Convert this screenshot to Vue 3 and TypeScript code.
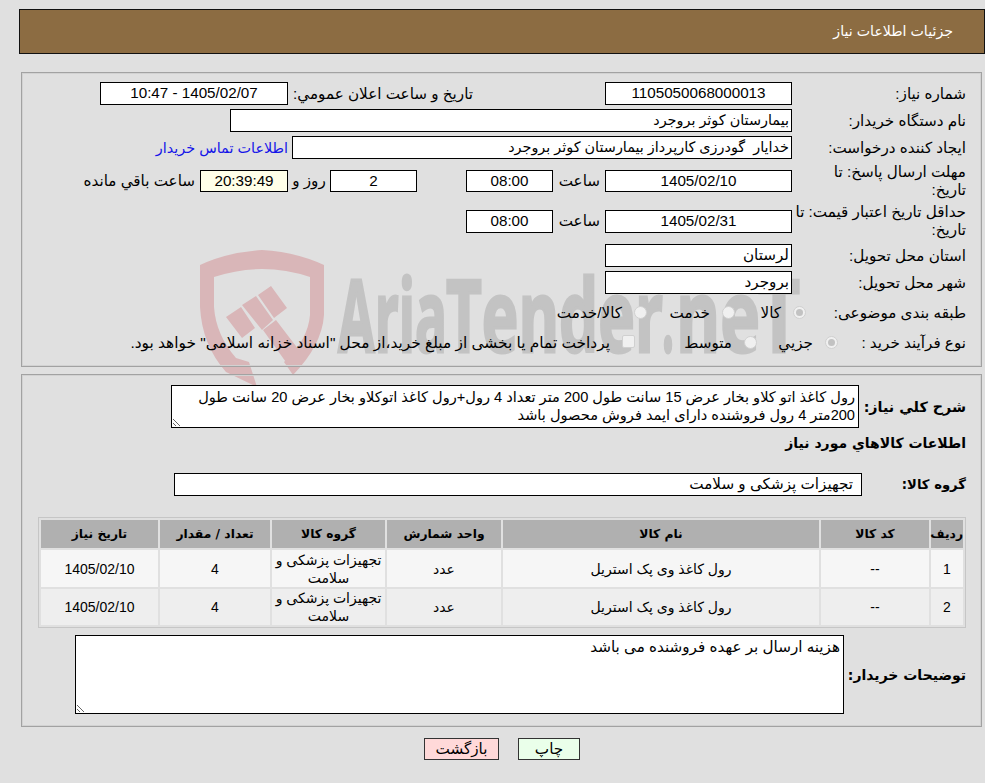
<script setup lang="ts">
interface Item { row: number; code: string; name: string; unit: string; group: string; qty: number; date: string }
const items: Item[] = [
  { row: 1, code: '--', name: 'رول کاغذ وی پک استریل', unit: 'عدد', group: 'تجهیزات پزشکی و سلامت', qty: 4, date: '1405/02/10' },
  { row: 2, code: '--', name: 'رول کاغذ وی پک استریل', unit: 'عدد', group: 'تجهیزات پزشکی و سلامت', qty: 4, date: '1405/02/10' }
]
const description = 'رول کاغذ اتو کلاو بخار عرض 15 سانت طول 200 متر تعداد 4 رول+رول کاغذ اتوکلاو بخار عرض 20 سانت طول 200متر 4 رول فروشنده دارای ایمد فروش محصول باشد'
const buyerNote = 'هزینه ارسال بر عهده فروشنده می باشد'
</script>

<template>
  <div class="page" dir="rtl">
    <svg class="watermark" width="985" height="400" viewBox="0 0 985 400" aria-hidden="true">
      <path class="shield" d="M262 250 Q296 252 324 265 L324 315 Q322 345 293 375 L284 362 Q308 340 310 315 L310 277 Q286 269 262 269 Q238 269 214 277 L214 307 Q216 335 236 358 L249 362 L257 387 L226 372 Q202 345 200 307 L200 265 Q228 252 262 250 Z" />
      <path class="shield" d="M226 317 L241 307 L255 328 L242 338 Z M242 305 L256 296 L273 320 L262 330 Z M258 295 L271 286 L287 308 L274 318 Z M263 330 L276 320 L305 358 L293 372 Z" />
      <g class="wm-text">
        <text x="338" y="352" textLength="109" lengthAdjust="spacingAndGlyphs">Aria</text>
        <text x="446" y="352" textLength="217" lengthAdjust="spacingAndGlyphs">Tender</text>
        <text x="662" y="352" textLength="12" lengthAdjust="spacingAndGlyphs">.</text>
        <text x="676" y="352" textLength="84" lengthAdjust="spacingAndGlyphs">ne</text>
        <text x="758" y="352" textLength="42" lengthAdjust="spacingAndGlyphs">T</text>
      </g>
    </svg>

    <header class="title-bar">جزئیات اطلاعات نیاز</header>

    <section class="panel panel-top">
      <div class="row r1">
        <label class="lbl">شماره نیاز:</label>
        <div class="box center w-date">1105050068000013</div>
        <span class="public-lbl">تاریخ و ساعت اعلان عمومي:</span>
        <div class="box center w-public">1405/02/07 - 10:47</div>
      </div>
      <div class="row r2">
        <label class="lbl">نام دستگاه خریدار:</label>
        <div class="box w-buyer">بیمارستان کوثر بروجرد</div>
      </div>
      <div class="row r3">
        <label class="lbl">ایجاد کننده درخواست:</label>
        <div class="box w-creator">خدایار&nbsp; گودرزی کارپرداز بیمارستان کوثر بروجرد</div>
        <a class="contact" href="#">اطلاعات تماس خریدار</a>
      </div>
      <div class="row r4">
        <label class="lbl wrap-early">مهلت ارسال پاسخ: تا تاریخ:</label>
        <div class="box center w-date">1405/02/10</div>
        <span class="time-lbl">ساعت</span>
        <div class="box center w-time">08:00</div>
        <div class="box center w-time days">2</div>
        <span class="day-lbl">روز و</span>
        <div class="box center w-remain remain">20:39:49</div>
        <span class="left-lbl">ساعت باقي مانده</span>
      </div>
      <div class="row r5">
        <label class="lbl wrap-late">حداقل تاریخ اعتبار قیمت: تا تاریخ:</label>
        <div class="box center w-date">1405/02/31</div>
        <span class="time-lbl">ساعت</span>
        <div class="box center w-time">08:00</div>
      </div>
      <div class="row r6">
        <label class="lbl">استان محل تحویل:</label>
        <div class="box w-date">لرستان</div>
      </div>
      <div class="row r7">
        <label class="lbl">شهر محل تحویل:</label>
        <div class="box w-date">بروجرد</div>
      </div>
      <div class="row r8">
        <label class="lbl">طبقه بندی موضوعی:</label>
        <div class="choices c-subject">
          <span class="choice c1"><i class="radio on"></i>کالا</span>
          <span class="choice c2"><i class="radio"></i>خدمت</span>
          <span class="choice c3"><i class="radio"></i>کالا/خدمت</span>
        </div>
      </div>
      <div class="row r9">
        <label class="lbl">نوع فرآیند خرید :</label>
        <div class="choices c-process">
          <span class="choice c4"><i class="radio on"></i>جزيي</span>
          <span class="choice c5"><i class="radio"></i>متوسط</span>
          <span class="choice c6"><i class="check"></i>پرداخت تمام یا بخشی از مبلغ خرید،از محل "اسناد خزانه اسلامی" خواهد بود.</span>
        </div>
      </div>
    </section>

    <section class="panel panel-bottom">
      <div class="row desc-row">
        <label class="blbl desc-lbl">شرح كلي نياز:</label>
        <textarea class="area area-desc" readonly :value="description"></textarea>
      </div>
      <h3 class="blbl list-title">اطلاعات كالاهاي مورد نياز</h3>
      <div class="row group-row">
        <label class="blbl group-lbl">گروه كالا:</label>
        <div class="box group-box">تجهیزات پزشکی و سلامت</div>
      </div>
      <table class="grid">
        <colgroup>
          <col style="width:32px" /><col style="width:108px" /><col style="width:316px" /><col style="width:114px" /><col style="width:113px" /><col style="width:110px" /><col style="width:117px" />
        </colgroup>
        <thead>
          <tr>
            <th>ردیف</th><th>کد کالا</th><th>نام کالا</th><th>واحد شمارش</th><th>گروه کالا</th><th>تعداد / مقدار</th><th>تاریخ نیاز</th>
          </tr>
        </thead>
        <tbody>
          <tr v-for="item in items" :key="item.row">
            <td>{{ item.row }}</td>
            <td>{{ item.code }}</td>
            <td>{{ item.name }}</td>
            <td>{{ item.unit }}</td>
            <td>{{ item.group }}</td>
            <td>{{ item.qty }}</td>
            <td>{{ item.date }}</td>
          </tr>
        </tbody>
      </table>
      <div class="row note-row">
        <label class="blbl note-lbl">توضیحات خریدار:</label>
        <textarea class="area area-note" readonly :value="buyerNote"></textarea>
      </div>
    </section>

    <footer class="actions">
      <button class="btn print" type="button">چاپ</button>
      <button class="btn back" type="button">بازگشت</button>
    </footer>
  </div>
</template>

<style>
html, body { margin: 0; background: #e0e0e0; }
</style>

<style scoped>
.page {
  position: relative;
  width: 985px;
  height: 783px;
  overflow: hidden;
  box-sizing: border-box;
  padding-top: 9px;
  background: #e0e0e0;
  color: #000;
  font-family: "Liberation Sans", "DejaVu Sans", sans-serif;
  font-size: 15.2px;
}
.watermark { position: absolute; left: 0; top: 0; z-index: 0; }
.shield { fill: #d9b6b8; }
.wm-text text { fill: #c3c3c3; stroke: #c3c3c3; stroke-width: 3px; font-family: "Open Sans", sans-serif; font-weight: 700; font-size: 100px; direction: ltr; }
.title-bar, .panel, .actions { position: relative; z-index: 1; }
.title-bar {
  box-sizing: border-box;
  width: 966px;
  height: 45px;
  border: 1px solid #111;
  background: #8c6c42;
  color: #fff;
  font-size: 14.2px;
  line-height: 42px;
  padding-right: 31px;
}
.panel {
  box-sizing: border-box;
  width: 961px;
  margin-right: 3px;
  border: 1px solid #a2a2a2;
  box-shadow: inset 0 0 0 1px #d2d2d2;
  padding-right: 15px;
}
.panel-top { height: 295px; margin-top: 18px; padding-top: 9px; }
.panel-bottom { height: 353px; margin-top: 7px; padding-top: 10px; }
.row { display: flex; align-items: center; }
.lbl { width: 174px; flex: none; line-height: 18px; box-sizing: border-box; padding-left: 6px; }
.wrap-early { padding-left: 14px; }
.wrap-late { padding-left: 0; }
.box {
  box-sizing: border-box;
  height: 23px;
  border: 1px solid #000;
  background: #fff;
  line-height: 20px;
  padding: 0 2px;
  flex: none;
  white-space: nowrap;
}
.center { text-align: center; }
.w-date { width: 187px; }
.w-public { width: 188px; }
.w-buyer { width: 562px; font-size: 14.4px; }
.w-creator { width: 500px; font-size: 14.4px; }
.w-time { width: 87px; }
.w-remain { width: 88px; }
.remain { background: #ffffe8; }
.r1 { height: 23px; }
.r2 { height: 23px; margin-top: 4px; }
.r3 { height: 23px; margin-top: 4px; }
.r4 { height: 36px; margin-top: 4px; }
.r4 .box { height: 22px; }
.r5 { height: 36px; margin-top: 4px; }
.r6 { height: 23px; margin-top: 5px; }
.r7 { height: 23px; margin-top: 4px; }
.r8 { height: 22px; margin-top: 8px; }
.r9 { height: 22px; margin-top: 8px; }
.public-lbl { width: 185px; margin-right: 132px; flex: none; white-space: nowrap; }
.contact { color: #1515e8; text-decoration: none; margin-right: 4px; white-space: nowrap; font-size: 14.4px; }
.time-lbl { width: 52px; flex: none; box-sizing: border-box; padding-right: 5px; white-space: nowrap; }
.days { margin-right: 49px; }
.day-lbl { width: 42px; flex: none; text-align: center; white-space: nowrap; }
.left-lbl { margin-right: 5px; white-space: nowrap; }
.choices { display: flex; align-items: center; white-space: nowrap; }
.choice { display: inline-flex; align-items: center; gap: 12px; }
.c-subject { margin-right: -14px; }
.c-process { margin-right: -46px; }
.c1 { width: 71px; }
.c2 { width: 88px; }
.c4 { width: 81px; }
.c5 { width: 122px; }
.c6 { font-size: 15.4px; }
.radio {
  flex: none;
  width: 13px;
  height: 13px;
  margin-top: -2px;
  border-radius: 50%;
  border: 1px solid #d0d0d0;
  background: #f0f0f0;
  box-sizing: border-box;
  position: relative;
}
.radio.on::after {
  content: "";
  position: absolute;
  inset: 2px;
  border-radius: 50%;
  background: #c2c2c2;
}
.check {
  flex: none;
  width: 13px;
  height: 13px;
  margin-top: -4px;
  border: 1px solid #d0d0d0;
  border-radius: 2px;
  background: #f0f0f0;
  box-sizing: border-box;
}
.blbl { font-weight: 700; font-size: 14px; margin: 0; font-family: "DejaVu Sans", sans-serif; }
.desc-row { height: 43px; }
.desc-lbl { width: 122px; flex: none; box-sizing: border-box; white-space: nowrap; font-size: 14.3px; }
.area {
  box-sizing: border-box;
  border: 1px solid #000;
  background: #fff;
  font-family: "Liberation Sans", "DejaVu Sans", sans-serif;
  font-size: 15.2px;
  line-height: 18px;
  padding: 2px 3px;
  margin: 0;
  outline: none;
  display: block;
  flex: none;
  color: #000;
}
.area-desc { width: 688px; height: 43px; margin-right: -15px; font-size: 14.6px; }
.area-desc, .area-note { overflow: hidden; }
.list-title { height: 18px; line-height: 18px; margin-top: 6px; }
.group-row { height: 23px; margin-top: 21px; }
.group-lbl { width: 104px; flex: none; font-size: 13.2px; }
.group-box { width: 688px; padding-right: 8px; }
.grid {
  margin-top: 21px;
  width: 928px;
  table-layout: fixed;
  border-collapse: separate;
  border-spacing: 2px;
  border: 1px solid #c6c6c6;
}
.grid th {
  height: 28px;
  padding: 0;
  background: #b0b0b0;
  font-family: "DejaVu Sans", sans-serif;
  font-size: 12.3px;
  font-weight: 700;
  text-align: center;
}
.grid td {
  height: 36px;
  padding: 0;
  text-align: center;
  line-height: 18px;
  font-size: 14px;
}
.grid tbody tr:nth-child(1) td { background: #f6f6f6; height: 37px; }
.grid tbody tr:nth-child(2) td { background: #eeeeee; }
.note-row { height: 79px; margin-top: 7px; }
.note-lbl { width: 122px; flex: none; }
.area-note { width: 769px; height: 79px; padding: 2px 3px; }
.actions {
  display: flex;
  margin-top: 11px;
  padding-right: 405px;
  gap: 19px;
}
.btn {
  box-sizing: border-box;
  height: 22px;
  border: 1px solid #333;
  margin: 0;
  padding: 0;
  font-family: "Liberation Sans", "DejaVu Sans", sans-serif;
  font-size: 15.2px;
  color: #000;
}
.print { width: 62px; background: #eaffea; }
.back { width: 75px; background: #ffd9d9; }
</style>
